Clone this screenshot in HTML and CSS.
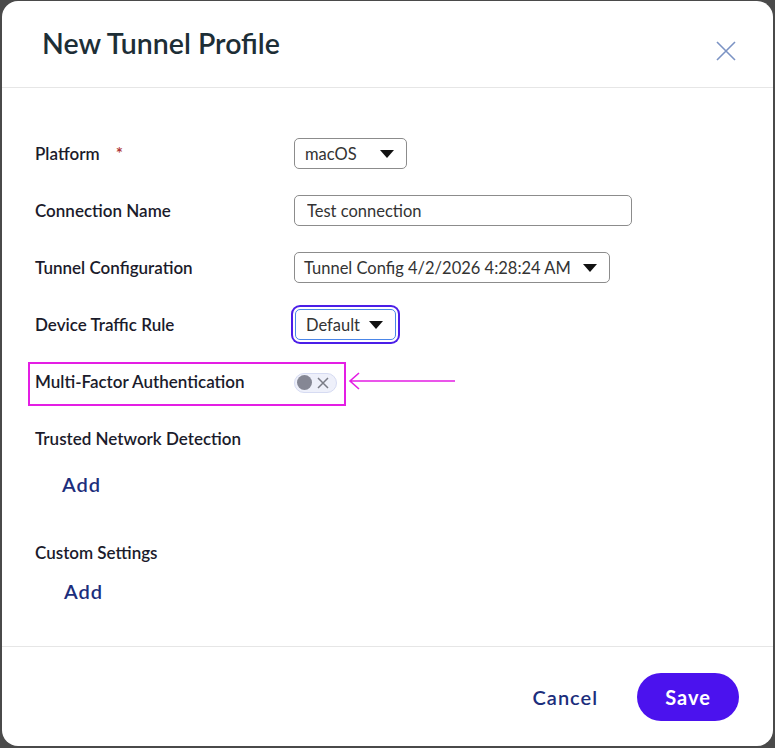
FILE: index.html
```html
<!DOCTYPE html>
<html lang="en">
<head>
    <meta charset="UTF-8">
    <meta name="viewport" content="width=device-width, initial-scale=1.0">
    <title>New Tunnel Profile</title>
    <link rel="stylesheet" href="styles.css">
</head>
<body>
    <div class="modal">
        <div class="modal-header">
            <h1>New Tunnel Profile</h1>
            <button class="close-btn" aria-label="Close">
                <svg width="20" height="20" viewBox="0 0 20 20">
                    <path d="M1 1 L19 19 M19 1 L1 19" stroke="#7b93c4" stroke-width="1.6" fill="none"/>
                </svg>
            </button>
        </div>

        <div class="modal-body">
            <div class="row">
                <label>Platform <span class="required">*</span></label>
                <div class="select select-platform">macOS <span class="caret"></span></div>
            </div>
            <div class="row">
                <label>Connection Name</label>
                <input class="text-input" type="text" value="Test connection">
            </div>
            <div class="row">
                <label>Tunnel Configuration</label>
                <div class="select select-tunnel">Tunnel Config 4/2/2026 4:28:24 AM <span class="caret"></span></div>
            </div>
            <div class="row">
                <label>Device Traffic Rule</label>
                <div class="select select-focused">Default <span class="caret"></span></div>
            </div>
            <div class="row row-mfa">
                <label>Multi-Factor Authentication</label>
                <div class="toggle">
                    <span class="knob"></span>
                    <svg width="12" height="12" viewBox="0 0 12 12">
                        <path d="M1 1 L11 11 M11 1 L1 11" stroke="#7a7c86" stroke-width="1.5" fill="none"/>
                    </svg>
                </div>
                <div class="highlight-box"></div>
                <svg class="callout-arrow" width="110" height="20" viewBox="0 0 110 20">
                    <path d="M108 10 H3 M12 2 L3 10 L12 18" stroke="#e41ee4" stroke-width="1.6" fill="none"/>
                </svg>
            </div>
            <div class="section">
                <div class="section-label">Trusted Network Detection</div>
                <a class="add-link" href="#">Add</a>
            </div>
            <div class="section section-custom">
                <div class="section-label">Custom Settings</div>
                <a class="add-link" href="#">Add</a>
            </div>
        </div>

        <div class="modal-footer">
            <button class="cancel-btn">Cancel</button>
            <button class="save-btn">Save</button>
        </div>
    </div>
</body>
</html>
```

FILE: styles.css
```css
* {
    box-sizing: border-box;
}
body {
    margin: 0;
    background-color: #4a4a4a;
    font-family: Lato, "Noto Sans", sans-serif;
    color: #1b1b2b;
}
.modal {
    margin: 1px 2px 2px 2px;
    height: 745px;
    background: white;
    border-radius: 16px;
    display: flex;
    flex-direction: column;
}
.modal-header {
    height: 87px;
    border-bottom: 1px solid #e6e6e6;
    display: flex;
    align-items: center;
    justify-content: space-between;
    padding: 0 37px 0 40px;
}
.modal-header h1 {
    margin: 0;
    font-size: 28.5px;
    font-weight: 600;
    color: #1d2e36;
    padding-bottom: 2px;
}
.close-btn {
    background: none;
    border: none;
    padding: 0;
    width: 20px;
    height: 20px;
    margin-top: 14px;
    cursor: pointer;
}
.modal-body {
    flex: 1;
    padding: 37px 0 0 33px;
}
.row {
    position: relative;
    height: 57px;
    display: grid;
    grid-template-columns: 259px auto;
    align-items: center;
    justify-items: start;
}
label, .section-label {
    font-size: 17px;
    font-weight: 600;
    color: #1b1b2b;
}
.required {
    color: #b03a3a;
    margin-left: 12px;
}
.select, .text-input {
    height: 31px;
    border: 1px solid #8c8c8c;
    border-radius: 5px;
    font-family: inherit;
    font-size: 16.5px;
    color: #333;
    padding: 0 12px 0 10px;
    display: flex;
    align-items: center;
    gap: 8px;
    background: white;
}
.text-input {
    width: 338px;
    padding-left: 12px;
}
.select-platform {
    width: 113px;
    justify-content: space-between;
}
.select-tunnel {
    width: 316px;
    justify-content: space-between;
    padding-left: 9px;
}
.select-focused {
    width: 101px;
    justify-content: space-between;
    border-color: #4a86e8;
    box-shadow: 0 0 0 2px white, 0 0 0 4px #4b1ee8;
    margin-left: 1px;
}
.caret {
    width: 0;
    height: 0;
    border-left: 7px solid transparent;
    border-right: 7px solid transparent;
    border-top: 8px solid #111;
}
.toggle {
    width: 43px;
    height: 20px;
    border-radius: 10px;
    background: #eef0fa;
    border: 1px solid #d6dbf2;
    display: flex;
    align-items: center;
    gap: 5px;
    padding-left: 2px;
    margin-top: 2px;
}
.knob {
    width: 15px;
    height: 15px;
    border-radius: 50%;
    background: #858794;
}
.highlight-box {
    position: absolute;
    left: -7px;
    top: 9px;
    width: 318px;
    height: 44px;
    border: 2px solid #e41ee4;
}
.callout-arrow {
    position: absolute;
    left: 312px;
    top: 18px;
}
.section {
    display: flex;
    flex-direction: column;
}
.section .section-label {
    height: 57px;
    display: flex;
    align-items: center;
}
.add-link {
    font-size: 20px;
    font-weight: 600;
    color: #1c2e7c;
    text-decoration: none;
    letter-spacing: 1px;
    margin-left: 27px;
    line-height: 34px;
    align-self: flex-start;
}
.section-custom {
    margin-top: 31px;
}
.section-custom .section-label {
    height: 40px;
}
.section-custom .add-link {
    margin-left: 29px;
    margin-top: 2px;
}
.modal-footer {
    height: 100px;
    border-top: 1px solid #e6e6e6;
    display: flex;
    align-items: center;
    justify-content: flex-end;
    gap: 39px;
    padding-right: 34px;
}
.cancel-btn {
    background: none;
    border: none;
    font-family: inherit;
    font-size: 20px;
    font-weight: 600;
    letter-spacing: 1px;
    color: #1c2e7c;
    cursor: pointer;
    padding: 0;
}
.save-btn {
    width: 102px;
    height: 48px;
    border: none;
    border-radius: 24px;
    background-color: #4b12ee;
    color: white;
    font-family: inherit;
    font-size: 20px;
    font-weight: 700;
    letter-spacing: 1px;
    cursor: pointer;
}
```
